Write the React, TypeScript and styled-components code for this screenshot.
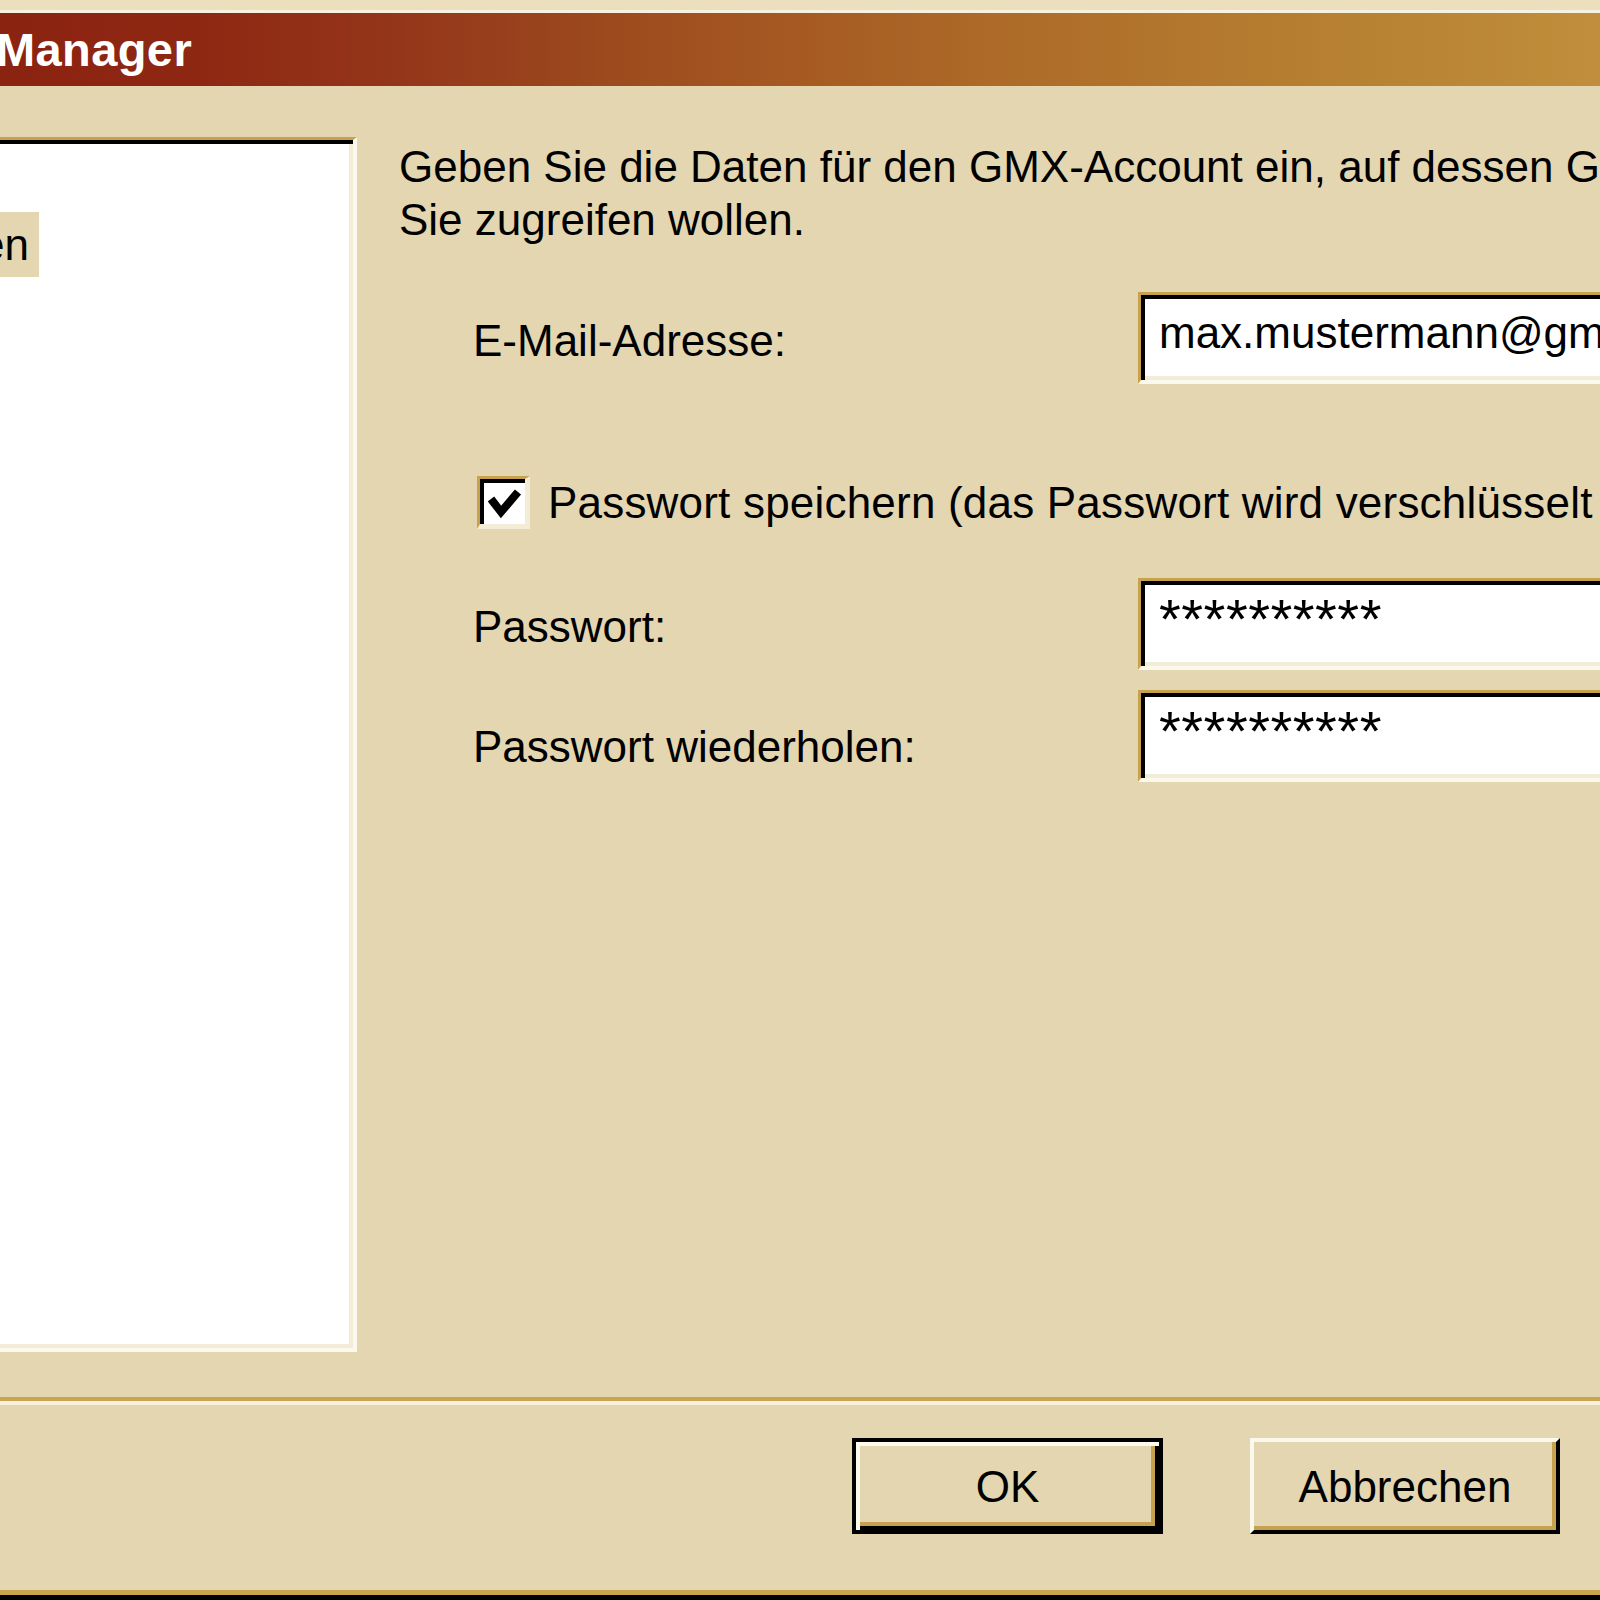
import React from "react";
import styled, { createGlobalStyle } from "styled-components";

const FACE = "#e3d6b0";
const GOLD = "#c6a24f";
const LIGHT = "#f3ecd7";
const HILITE = "#fbf8ee";

const GlobalStyle = createGlobalStyle`
  *, *::before, *::after { box-sizing: border-box; }
  html, body { margin: 0; padding: 0; background: ${FACE}; }
  body { font-family: "Liberation Sans", Arial, sans-serif; }
`;

const Window = styled.div`
  width: 1600px;
  height: 1600px;
  overflow: hidden;
  display: flex;
  flex-direction: column;
  background: ${FACE};
  color: #000;
  font-family: "Liberation Sans", Arial, sans-serif;
  font-size: 44px;
  line-height: 53px;
`;

const FrameTop = styled.div`
  flex: none;
  height: 13px;
  background: #ebdfbe;
  border-bottom: 3px solid #f7f1df;
`;

const TitleBar = styled.div`
  flex: none;
  height: 73px;
  display: flex;
  align-items: flex-start;
  background: linear-gradient(
    90deg,
    #8b2311 0%,
    #8e2712 12%,
    #94361a 25%,
    #9c4a1e 38%,
    #a65a22 50%,
    #ad6a28 62%,
    #b3782e 75%,
    #b98434 88%,
    #c08e3c 100%
  );
`;

const TitleText = styled.span`
  margin-left: -4px;
  color: #fff;
  font-weight: bold;
  font-size: 47px;
  letter-spacing: 0.4px;
  line-height: 73px;
  white-space: nowrap;
`;

const Body = styled.div`
  flex: none;
  height: 1311px;
  display: flex;
  align-items: flex-start;
`;

const ListBox = styled.div`
  flex: none;
  width: 381px;
  height: 1215px;
  margin-top: 51px;
  margin-left: -24px;
  padding-top: 72px;
  background: #fff;
  border-style: solid;
  border-width: 3px 4px 4px 3px;
  border-color: ${GOLD} ${HILITE} ${HILITE} ${GOLD};
  box-shadow: inset 4px 4px 0 #000, inset -4px -4px 0 ${LIGHT};
  display: flex;
  flex-direction: column;
  align-items: flex-start;
`;

const ListItem = styled.div<{ $selected?: boolean }>`
  height: 65px;
  line-height: 65px;
  padding: 0 10px 0 1px;
  background: ${(p) => (p.$selected ? FACE : "transparent")};
  white-space: nowrap;
`;

const RightPanel = styled.div`
  flex: 1;
  min-width: 0;
  padding: 54px 0 0 42px;
  display: flex;
  flex-direction: column;
`;

const Description = styled.p`
  margin: 0;
  white-space: nowrap;
`;

const FieldRow = styled.div<{ $top: number }>`
  margin-top: ${(p) => p.$top}px;
  padding-left: 74px;
  display: grid;
  grid-template-columns: 665px 700px;
  align-items: start;
`;

const FieldLabel = styled.label<{ $offset: number }>`
  padding-top: ${(p) => p.$offset}px;
  white-space: nowrap;
`;

const TextBox = styled.div<{ $password?: boolean }>`
  height: 92px;
  padding: 11px 0 0 18px;
  background: #fff;
  border-style: solid;
  border-width: 3px 4px 4px 3px;
  border-color: ${GOLD} ${HILITE} ${HILITE} ${GOLD};
  box-shadow: inset 4px 4px 0 #000, inset -4px -4px 0 ${LIGHT};
  white-space: nowrap;
  font-size: ${(p) => (p.$password ? "56px" : "44px")};
  letter-spacing: ${(p) => (p.$password ? "0.5px" : "0")};
`;

const CheckRow = styled.div<{ $top: number }>`
  margin-top: ${(p) => p.$top}px;
  padding-left: 78px;
  height: 53px;
  display: flex;
  align-items: center;
`;

const CheckBox = styled.span`
  flex: none;
  width: 53px;
  height: 53px;
  display: flex;
  align-items: center;
  justify-content: center;
  padding: 4px 0 0 4px;
  background: #fff;
  border-style: solid;
  border-width: 3px 5px 5px 3px;
  border-color: ${GOLD} ${LIGHT} ${LIGHT} ${GOLD};
  box-shadow: inset 4px 4px 0 #000;
`;

const CheckLabel = styled.span`
  margin-left: 18px;
  letter-spacing: 0.2px;
  white-space: nowrap;
`;

const Separator = styled.div`
  flex: none;
  height: 8px;
  border-top: 4px solid #c9a550;
  border-bottom: 4px solid #f6f0dd;
`;

const ButtonBar = styled.div`
  flex: none;
  height: 185px;
  padding: 33px 40px 0 0;
  display: flex;
  justify-content: flex-end;
  align-items: flex-start;
  gap: 87px;
`;

const Button = styled.button<{ $default?: boolean; $width: number }>`
  width: ${(p) => p.$width}px;
  height: 96px;
  margin: 0;
  padding: 0;
  background: ${FACE};
  font-family: "Liberation Sans", Arial, sans-serif;
  font-size: 44px;
  line-height: 53px;
  color: #000;
  border: 4px solid;
  border-color: ${(p) =>
    p.$default ? "#000" : `${HILITE} #000 #000 ${HILITE}`};
  box-shadow: ${(p) =>
    p.$default
      ? `inset 4px 4px 0 ${HILITE}, inset -4px -4px 0 #000, inset -8px -8px 0 ${GOLD}`
      : `inset -4px -4px 0 ${GOLD}`};
`;

const FrameBottom = styled.div`
  flex: none;
  height: 10px;
  border-top: 5px solid #c9a550;
  background: #000;
`;

const CheckMark = () => (
  <svg width="34" height="32" viewBox="0 0 34 32">
    <polyline
      points="3,11 13,24 30,4"
      fill="none"
      stroke="#000"
      strokeWidth="8"
      strokeLinejoin="miter"
      strokeLinecap="butt"
    />
  </svg>
);

export default function App() {
  return (
    <>
      <GlobalStyle />
      <Window>
        <FrameTop />
        <TitleBar>
          <TitleText>Manager</TitleText>
        </TitleBar>
        <Body>
          <ListBox>
            <ListItem $selected>en</ListItem>
          </ListBox>
          <RightPanel>
            <Description>
              Geben Sie die Daten für den GMX-Account ein, auf dessen GMX-Postfach
              <br />
              Sie zugreifen wollen.
            </Description>
            <FieldRow $top={46}>
              <FieldLabel $offset={22}>E-Mail-Adresse:</FieldLabel>
              <TextBox>max.mustermann@gmx.de</TextBox>
            </FieldRow>
            <CheckRow $top={92}>
              <CheckBox>
                <CheckMark />
              </CheckBox>
              <CheckLabel>
                Passwort speichern (das Passwort wird verschlüsselt gespeichert)
              </CheckLabel>
            </CheckRow>
            <FieldRow $top={49}>
              <FieldLabel $offset={22}>Passwort:</FieldLabel>
              <TextBox $password>**********</TextBox>
            </FieldRow>
            <FieldRow $top={20}>
              <FieldLabel $offset={30}>Passwort wiederholen:</FieldLabel>
              <TextBox $password>**********</TextBox>
            </FieldRow>
          </RightPanel>
        </Body>
        <Separator />
        <ButtonBar>
          <Button $default $width={311}>
            OK
          </Button>
          <Button $width={310}>Abbrechen</Button>
        </ButtonBar>
        <FrameBottom />
      </Window>
    </>
  );
}
